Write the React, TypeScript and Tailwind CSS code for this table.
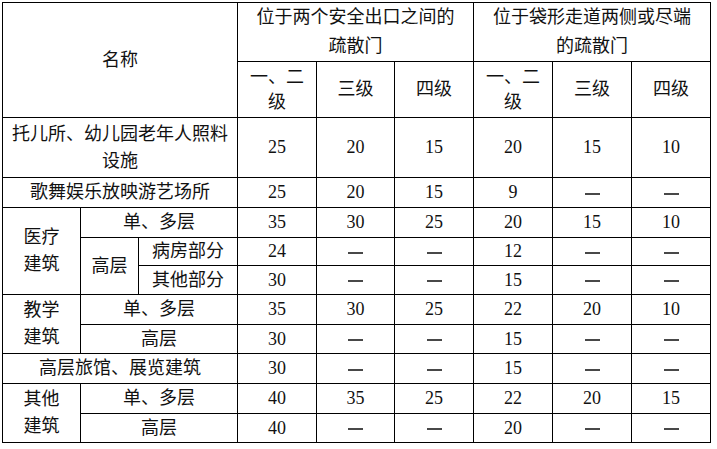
import React from 'react'

const cell = 'border border-black text-center align-middle p-0 font-normal'

const Dash = () => <span className="inline-block w-[15px] h-[2px] bg-[#484848] align-middle" />

type Row = (string | number)[]

const v = (x: string | number) => (x === '-' ? <Dash /> : x)

function Nums({ row }: { row: Row }) {
  return (
    <>
      {row.map((x, i) => (
        <td key={i} className={cell}>
          {v(x)}
        </td>
      ))}
    </>
  )
}

export default function App() {
  return (
    <div className="min-h-screen bg-white pl-[2px] pt-[2px]">
      <table
        className="table-fixed border-collapse w-[708px] text-[18px] leading-[27px] text-[#111]"
        style={{ fontFamily: '"Liberation Serif", "Noto Sans CJK SC", serif' }}
      >
        <colgroup>
          <col className="w-[78px]" />
          <col className="w-[58px]" />
          <col className="w-[99px]" />
          <col className="w-[79px]" />
          <col className="w-[78px]" />
          <col className="w-[79px]" />
          <col className="w-[79px]" />
          <col className="w-[79px]" />
          <col className="w-[79px]" />
        </colgroup>
        <tbody>
          <tr className="h-[59px]">
            <th rowSpan={2} colSpan={3} className={cell}>
              名称
            </th>
            <th colSpan={3} className={`${cell} leading-[29px]`}>
              位于两个安全出口之间的
              <br />
              疏散门
            </th>
            <th colSpan={3} className={`${cell} leading-[29px]`}>
              位于袋形走道两侧或尽端
              <br />
              的疏散门
            </th>
          </tr>
          <tr className="h-[56px]">
            <th className={`${cell} leading-[25px]`}>
              一、二
              <br />
              级
            </th>
            <th className={cell}>三级</th>
            <th className={cell}>四级</th>
            <th className={`${cell} leading-[25px]`}>
              一、二
              <br />
              级
            </th>
            <th className={cell}>三级</th>
            <th className={cell}>四级</th>
          </tr>
          <tr className="h-[60px]">
            <td colSpan={3} className={cell}>
              托儿所、幼儿园老年人照料
              <br />
              设施
            </td>
            <Nums row={[25, 20, 15, 20, 15, 10]} />
          </tr>
          <tr className="h-[30px]">
            <td colSpan={3} className={cell}>
              歌舞娱乐放映游艺场所
            </td>
            <Nums row={[25, 20, 15, 9, '-', '-']} />
          </tr>
          <tr className="h-[30px]">
            <td rowSpan={3} className={cell}>
              医疗
              <br />
              建筑
            </td>
            <td colSpan={2} className={cell}>
              单、多层
            </td>
            <Nums row={[35, 30, 25, 20, 15, 10]} />
          </tr>
          <tr className="h-[28px]">
            <td rowSpan={2} className={cell}>
              高层
            </td>
            <td className={cell}>病房部分</td>
            <Nums row={[24, '-', '-', 12, '-', '-']} />
          </tr>
          <tr className="h-[29px]">
            <td className={cell}>其他部分</td>
            <Nums row={[30, '-', '-', 15, '-', '-']} />
          </tr>
          <tr className="h-[30px]">
            <td rowSpan={2} className={cell}>
              教学
              <br />
              建筑
            </td>
            <td colSpan={2} className={cell}>
              单、多层
            </td>
            <Nums row={[35, 30, 25, 22, 20, 10]} />
          </tr>
          <tr className="h-[29px]">
            <td colSpan={2} className={cell}>
              高层
            </td>
            <Nums row={[30, '-', '-', 15, '-', '-']} />
          </tr>
          <tr className="h-[30px]">
            <td colSpan={3} className={cell}>
              高层旅馆、展览建筑
            </td>
            <Nums row={[30, '-', '-', 15, '-', '-']} />
          </tr>
          <tr className="h-[30px]">
            <td rowSpan={2} className={cell}>
              其他
              <br />
              建筑
            </td>
            <td colSpan={2} className={cell}>
              单、多层
            </td>
            <Nums row={[40, 35, 25, 22, 20, 15]} />
          </tr>
          <tr className="h-[29px]">
            <td colSpan={2} className={cell}>
              高层
            </td>
            <Nums row={[40, '-', '-', 20, '-', '-']} />
          </tr>
        </tbody>
      </table>
    </div>
  )
}
